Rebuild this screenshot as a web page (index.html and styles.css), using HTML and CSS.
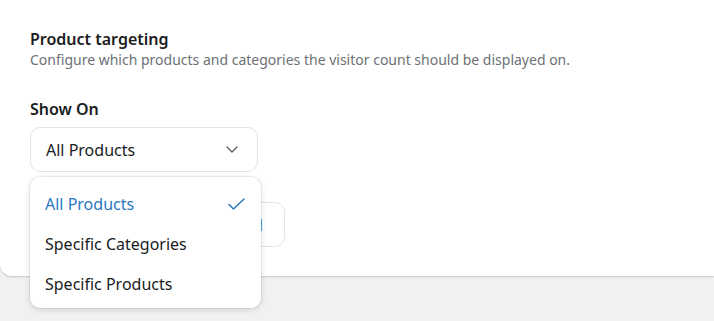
FILE: index.html
```html
<!DOCTYPE html>
<html lang="en">
<head>
  <meta charset="UTF-8">
  <meta name="viewport" content="width=device-width, initial-scale=1.0">
  <title>Product targeting</title>
  <link rel="stylesheet" href="styles.css">
</head>
<body>
  <section class="card">
    <h2 class="card-title">Product targeting</h2>
    <p class="card-sub">Configure which products and categories the visitor count should be displayed on.</p>

    <label class="field-label">Show On</label>
    <div class="select-wrap">
      <div class="select">
        <span>All Products</span>
        <svg class="chevron" width="12" height="7" viewBox="0 0 12 7">
          <path d="M1 1l5 5 5-5" fill="none" stroke="#5c5f62" stroke-width="1.4" stroke-linecap="round" stroke-linejoin="round"/>
        </svg>
      </div>

      <ul class="menu">
        <li class="menu-item selected">
          <span>All Products</span>
          <svg width="17" height="12" viewBox="0 0 17 12">
            <path d="M1 6.5l4.5 4.5L16 1" fill="none" stroke="#2b78c2" stroke-width="1.5" stroke-linecap="round" stroke-linejoin="round"/>
          </svg>
        </li>
        <li class="menu-item">Specific Categories</li>
        <li class="menu-item">Specific Products</li>
      </ul>
    </div>

    <button class="pick-btn">Select all</button>
  </section>
</body>
</html>
```

FILE: styles.css
```css
* {
  margin: 0;
  padding: 0;
  box-sizing: border-box;
}
html, body {
  min-height: 100vh;
}
body {
  font-family: 'Noto Sans', 'Open Sans', sans-serif;
  background: #f1f1f1;
  color: #1a1c1d;
}
.card {
  background: #fff;
  height: 276px;
  padding: 28px 30px 0;
  border-radius: 0 0 0 12px;
  box-shadow: 0 1px 2px rgba(0,0,0,0.18);
}
.card-title {
  font-size: 16px;
  line-height: 22px;
  font-weight: 600;
}
.card-sub {
  font-size: 14px;
  line-height: 20px;
  color: #6d7175;
}
.field-label {
  display: block;
  margin-top: 28px;
  font-size: 16px;
  line-height: 22px;
  font-weight: 600;
}
.select-wrap {
  position: relative;
  width: 228px;
  margin-top: 7px;
}
.select {
  height: 45px;
  display: flex;
  align-items: center;
  justify-content: space-between;
  padding: 0 19px 0 15px;
  border: 1px solid #e1e3e5;
  border-radius: 10px;
  font-size: 16px;
}
.menu {
  position: absolute;
  top: 50px;
  left: 0;
  width: 231px;
  padding: 7px 0 4px;
  list-style: none;
  background: #fff;
  border-radius: 10px;
  box-shadow: 0 0 0 1px rgba(0,0,0,0.06), 0 2px 6px rgba(0,0,0,0.12);
  z-index: 5;
}
.menu-item {
  height: 40px;
  display: flex;
  align-items: center;
  justify-content: space-between;
  padding: 0 16px 0 15px;
  font-size: 16px;
}
.menu-item.selected {
  color: #2b78c2;
}
.pick-btn {
  display: flex;
  justify-content: flex-end;
  align-items: center;
  width: 255px;
  height: 45px;
  margin-top: 30px;
  padding: 0 21px;
  background: #fff;
  border: 1px solid #e1e3e5;
  border-radius: 10px;
  font-family: inherit;
  font-size: 16px;
  color: #2b78c2;
}
```
